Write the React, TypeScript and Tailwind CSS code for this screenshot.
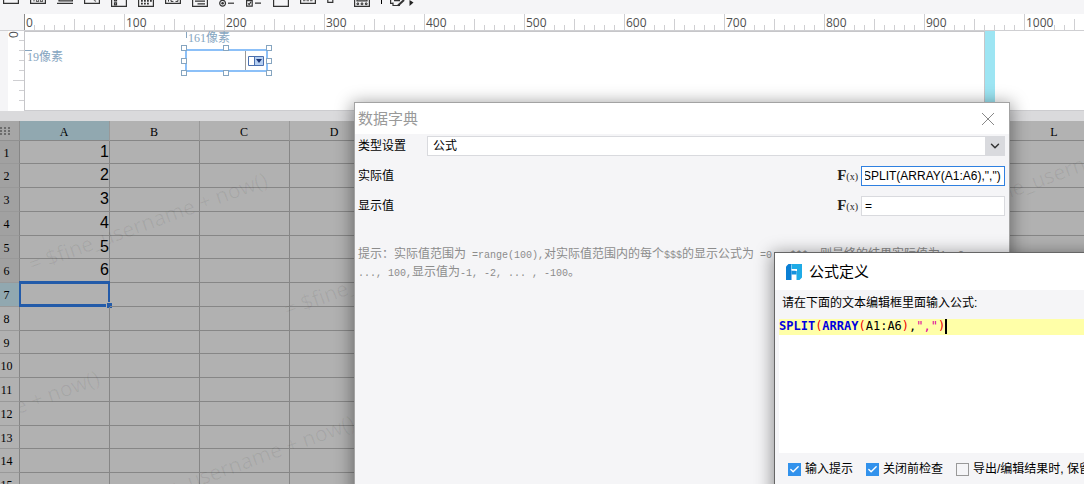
import React, { useEffect, useRef } from "react";
import { Check, ChevronDown } from "lucide-react";

const CJK = "font-['Liberation_Sans','Noto_Sans_CJK_SC',sans-serif]";
const SONG = "font-['Liberation_Serif','Noto_Sans_CJK_SC',serif]";

const stroke = { fill: "none", stroke: "#333", strokeWidth: 1.2 };

const TOOLS: { name: string; art: React.ReactNode }[] = [
  { name: "文本", art: <path d="M.6 0V3.4H15.4V0" {...stroke} /> },
  {
    name: "数字",
    art: (
      <>
        <path d="M.6 0V3.4H15.4V0" {...stroke} />
        <path d="M4 0v1.5M6.5 0v1.5h2V0M10.5 0v1.5h2V0" {...stroke} stroke="#666" />
      </>
    ),
  },
  { name: "密码", art: <path d="M2 0V.9H15.4V0M0 3.4H16" {...stroke} /> },
  {
    name: "文本域",
    art: (
      <>
        <path d="M.6 0V3.4H15.4V0" {...stroke} />
        <path d="M10 0l2 1.5" {...stroke} stroke="#777" />
      </>
    ),
  },
  {
    name: "列表",
    art: (
      <>
        <path d="M.6 0V6.4H15.4V0" {...stroke} />
        <path d="M3.5 2.8h2v2h-2zM3.5 0v.8h2V0" {...stroke} />
      </>
    ),
  },
  {
    name: "日期",
    art: (
      <>
        <path d="M.6 0V6.4H15.4V0" {...stroke} />
        <path d="M3 .8h11M3 3.6h8" {...stroke} strokeWidth={1.8} strokeDasharray="1.8 1.2" />
      </>
    ),
  },
  {
    name: "数值",
    art: (
      <>
        <path d="M.6 0V3.4H15.4V0" {...stroke} />
        <path d="M3.5 0v1.6M6 0v1.4h2.4M10.5 1.4h2.4V0" {...stroke} strokeWidth={1} />
      </>
    ),
  },
  {
    name: "标签",
    art: (
      <>
        <path d="M.6 0V6.4H15.4V0" {...stroke} />
        <path d="M3 1.2h10M5.5 3.8H13" {...stroke} />
      </>
    ),
  },
  {
    name: "单选",
    art: (
      <>
        <circle cx="3.6" cy="3.2" r="2.9" {...stroke} />
        <circle cx="3.6" cy="3.2" r="1.3" fill="#333" />
        <path d="M9 3.2h6" {...stroke} />
      </>
    ),
  },
  {
    name: "复选",
    art: (
      <>
        <path d="M.6 .6h5.6v5.6H.6z" {...stroke} />
        <path d="M2 3.4l1.2 1.2L5 1.8M9 3.2h6" {...stroke} />
      </>
    ),
  },
  { name: "按钮", art: <path d="M.6 0V6.4H15.4V0" {...stroke} /> },
  {
    name: "文件",
    art: (
      <>
        <path d="M.6 0V3.4H15.4V0" {...stroke} />
        <path d="M3 .6h10" {...stroke} stroke="#777" strokeDasharray="2.5 1" />
      </>
    ),
  },
  { name: "树", art: <path d="M.8 0v2.4h5V0" {...stroke} /> },
  {
    name: "视图树",
    art: (
      <>
        <path d="M.6 0V6.4H15.4V0M3 0v.8h10V0" {...stroke} />
        <path d="M3 3h1.6v1.6H3zM7.2 3h1.6v1.6H7.2zM11.4 3H13v1.6h-1.6z" {...stroke} strokeWidth={1} />
      </>
    ),
  },
];

function Toolbar() {
  return (
    <div className="flex h-[14px] items-start bg-[#f5f5f7] pl-[3px]">
      {TOOLS.map((t) => (
        <button key={t.name} type="button" aria-label={t.name} className="mr-[11px] block h-2 w-4 shrink-0">
          <svg viewBox="0 0 16 8" className="block h-2 w-4">
            {t.art}
          </svg>
        </button>
      ))}
      <span className="h-1 w-px bg-black" />
      <button type="button" aria-label="更多" className="ml-2 block h-2 w-6 shrink-0">
        <svg viewBox="0 0 24 8" className="block h-2 w-6">
          <path d="M.6 0v3.4h3M3 2.5v3h7M4 .6h6" {...stroke} />
          <path d="M8 5.6L14 0" {...stroke} strokeWidth={2} />
          <path d="M19.500 0l4 2.600-4 3.400z" fill="#222" />
        </svg>
      </button>
    </div>
  );
}

function HorizontalRuler() {
  return (
    <div className="flex h-[17px] border-b border-[#cfcfd2] bg-white">
      <div className="w-6 shrink-0 bg-[#f5f5f7]" />
      <div className="flex min-w-0 flex-1 overflow-hidden">
        {Array.from({ length: 11 }, (_, h) => (
          <div key={h} className="relative flex w-[100px] shrink-0 items-end">
            {Array.from({ length: 10 }, (_, t) => (
              <span
                key={t}
                className={
                  "w-[10px] shrink-0 border-l " +
                  (t === 0
                    ? h === 0
                      ? "h-4 border-[#8c8c8c]"
                      : "h-4 border-[#cfcfd2]"
                    : t === 5
                      ? "h-[11px] border-[#cfcfd2]"
                      : "h-[5px] border-[#cfcfd2]")
                }
              />
            ))}
            <span className="absolute top-0 left-[2px] font-['Open_Sans',sans-serif] text-[12px] leading-[17px] text-[#505050]">
              {h * 100}
            </span>
          </div>
        ))}
      </div>
    </div>
  );
}

function VerticalRuler() {
  return (
    <div className="relative ml-2 flex w-4 shrink-0 flex-col items-end bg-white pt-[9px]">
      <span className="absolute top-[-5px] left-[2px] -rotate-90 font-['Open_Sans',sans-serif] text-[12px] leading-[17px] text-[#505050]">
        0
      </span>
      {Array.from({ length: 7 }, (_, t) => (
        <span
          key={t}
          className={"h-[10px] shrink-0 border-t border-[#cfcfd2] " + (t === 4 ? "w-[11px]" : "w-[5px]")}
        />
      ))}
    </div>
  );
}

const HANDLES = [
  "top-[-6px] left-[-6px]",
  "top-[-6px] left-[36px]",
  "top-[-6px] right-[-6px]",
  "top-[7px] left-[-6px]",
  "top-[7px] right-[-6px]",
  "bottom-[-6px] left-[-6px]",
  "bottom-[-6px] left-[36px]",
  "bottom-[-6px] right-[-6px]",
];

function Canvas() {
  return (
    <div className="flex h-20 overflow-hidden bg-[#f5f5f7]">
      <VerticalRuler />
      <div className="flex flex-1 border-b border-[#cccccf] bg-white">
        <div className={`relative w-[961px] shrink-0 border border-b-0 border-[#c6c6c9] text-[12px] text-[#86a5c0] ${SONG}`}>
          <span className="absolute top-[18px] left-0 w-[7px] border-t border-[#86a5c0]" />
          <span className="absolute top-[17px] left-[2px] leading-[16px]">19像素</span>
          <span className="absolute top-0 left-[161px] h-[6px] border-l border-[#86a5c0]" />
          <span className="absolute top-[-2px] left-[163px] leading-[16px]">161像素</span>
          <div className="absolute top-[17px] left-[160px] flex h-[23px] w-[83px] items-center justify-end border-2 border-[#8cc0f8] bg-white">
            <span className="h-full w-px bg-[#999]" />
            <svg viewBox="0 0 16 10" className="mx-[2px] h-[10px] w-4">
              <path d="M.5.5h15v9H.5z" fill="#fff" stroke="#4a6fae" />
              <path d="M6.500 1H15v8H6.500z" fill="#b5cff2" />
              <path d="M6.500 1v8" stroke="#4a6fae" />
              <path d="M8 3h6l-3 4z" fill="#1b3578" />
            </svg>
            {HANDLES.map((p) => (
              <span key={p} className={`absolute size-[6px] border border-[#86a5c0] bg-white ${p}`} />
            ))}
          </div>
        </div>
        <div className="w-[10px] shrink-0 bg-[#9de5f3]" />
      </div>
    </div>
  );
}

const COLUMNS = ["A", "B", "C", "D", "E", "F", "G", "H", "I", "J", "K", "L"];
const VALUES = ["1", "2", "3", "4", "5", "6"];
const WATERMARKS = [
  "left-[13px] top-[113px]",
  "left-[268px] top-[158px]",
  "left-[-155px] top-[311px]",
  "left-[100px] top-[356px]",
  "left-[944px] top-[56px]",
];

function Sheet() {
  return (
    <div className="relative min-h-0 flex-1 overflow-hidden bg-[#b1b1b1]">
      <table className="w-[1100px] table-fixed border-separate border-spacing-0 font-['Liberation_Serif',serif] text-[12px] leading-[16px] text-black">
        <colgroup>
          <col className="w-[20px]" />
          {COLUMNS.map((c) => (
            <col key={c} className="w-[90px]" />
          ))}
        </colgroup>
        <thead>
          <tr className="h-5">
            <th className="border-r border-b border-[#909090] bg-[#a6a6a6] p-0">
              <svg viewBox="0 0 10 8" className="block h-2 w-[10px]" fill="#6c6c6c">
                {[0, 3, 6].map((y) =>
                  [0, 4, 8].map((x) => <rect key={`${x}-${y}`} x={x} y={y} width="2" height="2" />),
                )}
              </svg>
            </th>
            {COLUMNS.map((c) => (
              <th
                key={c}
                className={
                  "border-r border-b border-r-[#999] border-b-[#868686] p-0 pt-[2px] pr-px font-normal " +
                  (c === "A" ? "bg-[#91a8b0]" : "bg-[#b2b2b2]")
                }
              >
                {c}
              </th>
            ))}
          </tr>
        </thead>
        <tbody>
          {Array.from({ length: 15 }, (_, r) => (
            <tr key={r} className={r % 4 === 0 ? "h-[23px]" : "h-[24px]"}>
              <th
                className={
                  "border-r border-b border-r-[#868686] border-b-[#999] p-0 pt-px pr-[6px] font-normal " +
                  (r < 6 ? "bg-[#a1a1a1]" : r === 6 ? "bg-[#91a8b0]" : "bg-[#b1b1b1]")
                }
              >
                {r + 1}
              </th>
              {COLUMNS.map((c) => (
                <td
                  key={c}
                  className="relative border-r border-b border-[#868686] p-0 text-right align-top font-['Liberation_Sans',sans-serif] text-[16px] leading-[21px]"
                >
                  {c === "A" ? VALUES[r] : null}
                  {c === "A" && r === 6 ? (
                    <span className="absolute -inset-x-px -top-[2px] -bottom-px border-[3px] border-x-2 border-[#235ba9]">
                      <span className="absolute -right-[4px] -bottom-[4px] size-[6px] border-t border-l border-[#b1b1b1] bg-[#235ba9]" />
                    </span>
                  ) : null}
                </td>
              ))}
            </tr>
          ))}
        </tbody>
      </table>
      <div className="pointer-events-none absolute inset-0 top-5 left-5 overflow-hidden">
        {WATERMARKS.map((p) => (
          <span
            key={p}
            className={`absolute origin-bottom-left -rotate-[20deg] font-['Open_Sans',sans-serif] text-[21px] leading-[20px] whitespace-nowrap text-black/[0.06] ${p}`}
          >
            = $fine_username + now()
          </span>
        ))}
      </div>
    </div>
  );
}

function FormulaButton({ label }: { label: string }) {
  return (
    <button
      type="button"
      aria-label={label}
      className="mr-[3px] flex items-baseline font-['Liberation_Serif',serif] leading-5 text-[#222]"
    >
      <span className="text-[15px] font-bold">F</span>
      <span className="text-[10px]">(x)</span>
    </button>
  );
}

function Half({ children }: { children: React.ReactNode }) {
  return <span className="font-['Liberation_Mono',monospace] text-[10px] whitespace-pre">{children}</span>;
}

function DictionaryDialog() {
  const actual = useRef<HTMLInputElement>(null);
  useEffect(() => {
    if (actual.current) actual.current.scrollLeft = actual.current.scrollWidth;
  }, []);

  return (
    <section
      role="dialog"
      aria-labelledby="dict-title"
      className={`absolute top-[102px] -bottom-10 left-[354px] flex w-[656px] flex-col border border-[#a3a3a3] bg-[#f5f5f7] text-[12px] text-black shadow-[0_3px_16px_2px_rgba(0,0,0,0.4)] ${CJK}`}
    >
      <header className="flex h-[31px] shrink-0 items-center justify-between bg-white pr-[14px] pl-[3px]">
        <h2 id="dict-title" className="text-[15px] leading-5 text-[#999]">
          数据字典
        </h2>
        <button type="button" aria-label="关闭">
          <svg viewBox="0 0 14 14" className="size-[14px]">
            <path d="M1 1l12 12M13 1L1 13" stroke="#888" fill="none" />
          </svg>
        </button>
      </header>
      <div className="flex flex-col gap-[10px] pt-[2px] pr-1 pl-[3px]">
        <div className="flex h-5 items-center">
          <label htmlFor="type" className="w-[69px] leading-5">
            类型设置
          </label>
          <div className="grid h-5 flex-1">
            <select
              id="type"
              defaultValue="formula"
              className="col-start-1 row-start-1 w-full appearance-none border border-[#d9dade] bg-white pl-[5px] leading-4"
            >
              <option value="formula">公式</option>
            </select>
            <span className="pointer-events-none col-start-1 row-start-1 flex w-5 items-center justify-center justify-self-end bg-[#d9dade]">
              <ChevronDown className="size-[14px] text-[#333]" strokeWidth={2.5} />
            </span>
          </div>
        </div>
        <div className="flex h-5 items-center">
          <label htmlFor="actual" className="flex-1 leading-5">
            实际值
          </label>
          <FormulaButton label="编辑实际值公式" />
          <input
            id="actual"
            ref={actual}
            defaultValue={'=SPLIT(ARRAY(A1:A6),",")'}
            className="h-5 w-36 border border-[#2f80e0] bg-white px-[3px] outline-none"
          />
        </div>
        <div className="flex h-5 items-center">
          <label htmlFor="display" className="flex-1 leading-5">
            显示值
          </label>
          <FormulaButton label="编辑显示值公式" />
          <input
            id="display"
            defaultValue="="
            className="h-5 w-36 border border-[#d9dade] bg-white px-[3px] outline-none"
          />
        </div>
      </div>
      <p className="mt-[30px] pl-[3px] leading-[16px] whitespace-nowrap text-[#8c8c8c]">
        提示：实际值范围为<Half> =range(100),</Half>对实际值范围内的每个<Half>$$$</Half>的显示公式为
        <Half> =0 - $$$, </Half>则最终的结果实际值为<Half>1, 2,</Half>
        <br />
        <Half>..., 100,</Half>显示值为<Half>-1, -2, ... , -100</Half>。
      </p>
    </section>
  );
}

function Tick({ label, checked }: { label: string; checked?: boolean }) {
  return (
    <label className="flex shrink-0 items-center gap-1 whitespace-nowrap">
      <span className="grid size-[13px]">
        <input
          type="checkbox"
          defaultChecked={checked}
          className="peer col-start-1 row-start-1 size-[13px] appearance-none border border-[#999] bg-[#f5f5f7] checked:border-[#3292ec] checked:bg-[#3292ec]"
        />
        <Check
          className="pointer-events-none invisible col-start-1 row-start-1 size-[11px] self-center justify-self-center text-white peer-checked:visible"
          strokeWidth={3}
        />
      </span>
      {label}
    </label>
  );
}

function FormulaDialog() {
  return (
    <section
      role="dialog"
      aria-labelledby="formula-title"
      className={`absolute top-[252px] -right-10 -bottom-10 left-[774px] flex flex-col border border-[#666] bg-[#f5f5f7] text-[12px] text-black shadow-[0_3px_16px_2px_rgba(0,0,0,0.4)] ${CJK}`}
    >
      <header className="flex h-[37px] shrink-0 items-center gap-[7px] bg-white pl-[11px]">
        <svg viewBox="0 0 16 16" className="size-4">
          <path d="M2.500 0H5.500V16H0V2.500z" fill="#0a7fd4" />
          <path d="M5.500 0H16V13.500L13.500 16H10.500V5H5.500z" fill="#1fabe6" />
          <path d="M5.500 6.500H10.500V10.500H5.500z" fill="#1591dc" />
          <path d="M5.500 5H11V7H9.500V6.500H5.500z" fill="#fff" />
          <path d="M5.500 1v4" stroke="#8fd0f2" strokeWidth=".8" />
        </svg>
        <h2 id="formula-title" className="text-[15px] leading-5">
          公式定义
        </h2>
      </header>
      <p id="formula-hint" className="pt-[3px] pl-[7px] leading-5">
        请在下面的文本编辑框里面输入公式:
      </p>
      <div
        role="textbox"
        aria-multiline="true"
        aria-labelledby="formula-hint"
        contentEditable
        suppressContentEditableWarning
        className="mt-[6px] ml-1 h-[134px] shrink-0 bg-white font-['DejaVu_Sans_Mono',monospace] text-[12px] leading-[14px] outline-none"
      >
        <div className="flex h-4 items-start bg-[#ffffa8]">
          <b className="text-[#0000e0]">SPLIT</b>
          <span className="text-[#f00000]">(</span>
          <b className="text-[#0000e0]">ARRAY</b>
          <span className="text-[#f00000]">(</span>
          <span>A1:A6</span>
          <span className="text-[#f00000]">)</span>
          <span>,</span>
          <span className="text-[#dc009c]">","</span>
          <span className="text-[#f00000]">)</span>
          <span className="h-[15px] w-[2px] bg-black" />
        </div>
      </div>
      <div className="flex items-center gap-[13px] pt-[6px] pl-[13px] leading-5">
        <Tick label="输入提示" checked />
        <Tick label="关闭前检查" checked />
        <Tick label="导出/编辑结果时, 保留公式" />
      </div>
    </section>
  );
}

export default function App() {
  return (
    <main className="relative flex h-screen flex-col overflow-hidden bg-[#dadadc]">
      <Toolbar />
      <HorizontalRuler />
      <Canvas />
      <div className="h-[10px] shrink-0" />
      <Sheet />
      <DictionaryDialog />
      <FormulaDialog />
    </main>
  );
}
